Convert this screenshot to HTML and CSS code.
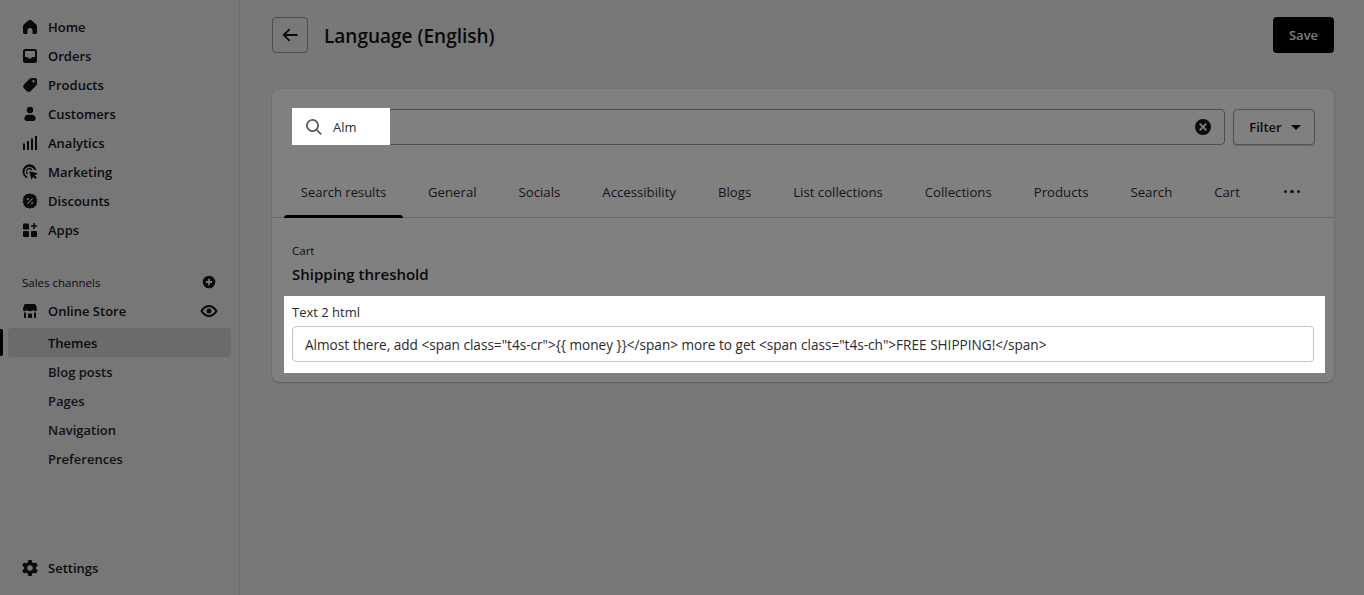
FILE: index.html
```html
<!DOCTYPE html>
<html lang="en">
<head>
    <meta charset="UTF-8">
    <title>Language (English)</title>
    <link rel="stylesheet" href="styles.css">
</head>
<body>
    <div class="app">
        <!-- Sidebar -->
        <aside class="sidebar">
            <nav class="nav-main">
                <a class="nav-item"><svg class="icon" viewBox="0 0 20 20"><path d="M10 2.800c-.5 0-1 .2-1.400.5L4 7.200c-.7.6-1 1.300-1 2.100V15.500c0 .9.700 1.500 1.500 1.500H7.500v-3.500a2.500 2.500 0 0 1 5 0V17h3c.8 0 1.500-.6 1.500-1.500V9.300c0-.8-.3-1.500-1-2.100l-4.600-3.900c-.4-.3-.9-.5-1.400-.5z"/></svg>Home</a>
                <a class="nav-item"><svg class="icon" viewBox="0 0 20 20"><path fill-rule="evenodd" d="M5.500 3A2.500 2.500 0 0 0 3 5.500v9A2.500 2.500 0 0 0 5.500 17h9a2.500 2.500 0 0 0 2.500-2.500v-9A2.500 2.500 0 0 0 14.500 3h-9zM5 5.500c0-.3.2-.5.500-.5h9c.3 0 .5.2.5.500V11h-2.500c-.5 0-.9.3-1 .8l-.2.7H8.200l-.2-.7c-.1-.5-.5-.8-1-.8H5V5.500z"/></svg>Orders</a>
                <a class="nav-item"><svg class="icon" viewBox="0 0 20 20"><path fill-rule="evenodd" d="M11.500 3H15c1.100 0 2 .9 2 2v3.500c0 .8-.3 1.500-.9 2.100l-5.300 5.300c-1.200 1.200-3 1.200-4.200 0l-2.500-2.500c-1.200-1.200-1.200-3 0-4.200l5.300-5.300c.6-.6 1.300-.9 2.100-.9zM13.500 7.500a1.200 1.200 0 1 0 0-2.400 1.200 1.200 0 0 0 0 2.400z"/></svg>Products</a>
                <a class="nav-item"><svg class="icon" viewBox="0 0 20 20"><circle cx="10" cy="6" r="3.200"/><path d="M4.300 14.500c0-2.300 1.900-3.700 3.700-3.700h4c1.800 0 3.700 1.400 3.700 3.700 0 1.500-1.100 2.500-2.400 2.500H6.700c-1.300 0-2.400-1-2.400-2.500z"/></svg>Customers</a>
                <a class="nav-item"><svg class="icon" viewBox="0 0 20 20"><path d="M3 10.500h2V17H3zM7 8h2v9H7zM11 5.500h2V17h-2zM15 3h2v14h-2z"/></svg>Analytics</a>
                <a class="nav-item"><svg class="icon" viewBox="0 0 20 20"><path d="M9.500 2.300a7.200 7.200 0 0 0-1.900 14.100l-.6-2.100a5.100 5.100 0 1 1 7.200-6.500l2.100.6A7.200 7.200 0 0 0 9.500 2.300z"/><path d="M9.500 5.800a3.700 3.700 0 0 0-1.500 7l-.4-2a2 2 0 1 1 3-2.900l2 .5A3.700 3.700 0 0 0 9.500 5.800z"/><path d="M9.200 9.200l8.800 2.400-3.300 1.600 2.200 2.300-1.400 1.400-2.300-2.200-1.600 3.300z"/></svg>Marketing</a>
                <a class="nav-item"><svg class="icon" viewBox="0 0 20 20"><path fill-rule="evenodd" d="M10 2.300l1.700.9 1.900-.3 1 1.600 1.700.8-.1 1.900 1.200 1.500-.8 1.300.8 1.300-1.200 1.500.1 1.900-1.700.8-1 1.600-1.900-.3-1.700.9-1.700-.9-1.900.3-1-1.600-1.700-.8.100-1.900-1.200-1.500.8-1.300-.8-1.300L3.600 7.200l-.1-1.900 1.700-.8 1-1.600 1.900.3zM12.300 7l-5.300 5.300.7.7L13 7.700zM7.900 8.900a1 1 0 1 0 0-2 1 1 0 0 0 0 2zM12.100 13.100a1 1 0 1 0 0-2 1 1 0 0 0 0 2z"/></svg>Discounts</a>
                <a class="nav-item"><svg class="icon" viewBox="0 0 20 20"><rect x="3" y="3.500" width="6" height="6" rx="1"/><rect x="3" y="11" width="6" height="6" rx="1"/><rect x="11" y="11" width="6" height="6" rx="1"/><path d="M13.250 3h1.500v2.250H17v1.500h-2.250V9h-1.500V6.750H11v-1.500h2.250z"/></svg>Apps</a>
            </nav>

            <div class="channels-head">
                <span>Sales channels</span>
                <svg class="icon-sm" viewBox="0 0 20 20"><path fill-rule="evenodd" d="M10 3a7 7 0 1 0 0 14 7 7 0 0 0 0-14zm-1 3.500h2V9h2.500v2H11v2.500H9V11H6.500V9H9z"/></svg>
            </div>
            <a class="nav-item store-item">
                <svg class="icon" viewBox="0 0 20 20"><path d="M5.500 3h9c.6 0 1.100.4 1.300.9L17 7.500v1c0 1-.8 1.700-1.700 1.700-.9 0-1.700-.5-2.100-1.200-.5.7-1.300 1.200-3.200 1.200-1.900 0-2.700-.5-3.200-1.200-.4.7-1.200 1.200-2.100 1.200-.9 0-1.700-.7-1.700-1.700v-1l1.200-3.600c.2-.5.700-.9 1.300-.9z"/><path d="M4 11.400h2V17H5c-.6 0-1-.4-1-1zM14 11.400h2V16c0 .6-.4 1-1 1h-1zM8 13.500c0-.6.4-1 1-1h2c.6 0 1 .4 1 1V17H8z"/></svg>
                <span class="nav-label">Online Store</span>
                <svg class="icon-eye" viewBox="0 0 20 20"><path fill-rule="evenodd" d="M10 4C5.800 4 2.900 7.500 1.800 9.300c-.3.500-.3 1 0 1.400C2.900 12.500 5.800 16 10 16s7.100-3.500 8.200-5.300c.3-.4.300-.9 0-1.400C17.100 7.500 14.200 4 10 4zm0 2c-3 0-5.200 2.400-6.300 4 1.100 1.600 3.300 4 6.300 4s5.200-2.400 6.300-4C15.200 8.400 13 6 10 6zm0 1.500a2.500 2.500 0 1 1 0 5 2.500 2.500 0 0 1 0-5z"/></svg>
            </a>
            <div class="subnav">
                <a class="sub-item active">Themes</a>
                <a class="sub-item">Blog posts</a>
                <a class="sub-item">Pages</a>
                <a class="sub-item">Navigation</a>
                <a class="sub-item">Preferences</a>
            </div>

            <a class="nav-item settings"><svg class="icon" viewBox="0 0 20 20"><path fill-rule="evenodd" d="M8.300 2h3.400l.5 2.500 1.500.8 2.400-.8 1.700 3-1.900 1.700v1.600l1.900 1.700-1.700 3-2.400-.8-1.500.8-.5 2.500H8.300l-.5-2.500-1.500-.8-2.400.8-1.700-3 1.900-1.700V9.200L2.200 7.500l1.700-3 2.400.8 1.500-.8zM10 7.300a2.700 2.700 0 1 0 0 5.400 2.700 2.700 0 0 0 0-5.400z"/></svg>Settings</a>
        </aside>

        <!-- Main content -->
        <main class="content">
            <header class="page-head">
                <button class="back-btn"><svg class="icon" viewBox="0 0 20 20"><path d="M9 3.500l1.300 1.300-4.300 4.300H17.500v1.800H6l4.300 4.300L9 16.500 2.500 10z"/></svg></button>
                <h1>Language (English)</h1>
                <button class="save-btn">Save</button>
            </header>

            <section class="card">
                <div class="search-row">
                    <div class="search-box">
                        <div class="search-spot">
                            <svg class="icon search-icon" viewBox="0 0 20 20"><path fill-rule="evenodd" d="M8.500 2a6.500 6.500 0 1 0 3.800 11.800l4.200 4.200 1.300-1.300-4.200-4.200A6.500 6.500 0 0 0 8.500 2zm0 1.800a4.700 4.700 0 1 1 0 9.400 4.700 4.700 0 0 1 0-9.400z"/></svg>
                            <span>Alm</span>
                        </div>
                        <svg class="icon clear-icon" viewBox="0 0 20 20"><path fill-rule="evenodd" d="M10 2a8 8 0 1 0 0 16 8 8 0 0 0 0-16zM7.300 6l2.700 2.700L12.700 6 14 7.300 11.300 10l2.700 2.700-1.300 1.300-2.700-2.700L7.300 14 6 12.700 8.700 10 6 7.300z"/></svg>
                    </div>
                    <button class="filter-btn">Filter<span class="caret"></span></button>
                </div>

                <div class="tabs">
                    <a class="tab active">Search results</a>
                    <a class="tab">General</a>
                    <a class="tab">Socials</a>
                    <a class="tab">Accessibility</a>
                    <a class="tab">Blogs</a>
                    <a class="tab">List collections</a>
                    <a class="tab">Collections</a>
                    <a class="tab">Products</a>
                    <a class="tab">Search</a>
                    <a class="tab">Cart</a>
                    <a class="tab more"><i></i><i></i><i></i></a>
                </div>

                <div class="section">
                    <div class="crumb">Cart</div>
                    <h2>Shipping threshold</h2>
                    <div class="field-spot">
                        <label>Text 2 html</label>
                        <div class="text-input">Almost there, add &lt;span class="t4s-cr"&gt;{{ money }}&lt;/span&gt; more to get &lt;span class="t4s-ch"&gt;FREE SHIPPING!&lt;/span&gt;</div>
                    </div>
                </div>
            </section>
        </main>
    </div>
</body>
</html>
```

FILE: styles.css
```css
* {
    box-sizing: border-box;
}

html, body {
    margin: 0;
    padding: 0;
    height: 595px;
    overflow: hidden;
}

body {
    font-family: "Open Sans", "Noto Sans", sans-serif;
    font-size: 13px;
    color: #0b0b0b;
    background: #787878;
}

.app {
    display: flex;
    height: 595px;
}

/* Sidebar */
.sidebar {
    width: 240px;
    flex-shrink: 0;
    display: flex;
    flex-direction: column;
    padding-top: 12px;
    background: #777778;
    border-right: 1px solid #6b6b6b;
}

.nav-item {
    display: flex;
    align-items: center;
    height: 29px;
    padding-left: 20px;
    font-weight: 600;
    color: #0b0b0d;
}

.icon {
    width: 20px;
    height: 20px;
    flex-shrink: 0;
    fill: #0a0a0a;
}

.nav-item .icon {
    margin-right: 8px;
}

.nav-label {
    flex: 1;
}

.channels-head {
    display: flex;
    justify-content: space-between;
    align-items: center;
    height: 20px;
    margin-top: 28px;
    padding: 0 22px;
    font-size: 11.500px;
}

.store-item {
    margin-top: 4px;
}

.icon-sm {
    width: 18px;
    height: 18px;
    margin-right: -1px;
    fill: #0a0a0a;
}

.icon-eye {
    width: 20px;
    height: 20px;
    margin-right: 20px;
    fill: #0a0a0a;
}

.subnav {
    display: flex;
    flex-direction: column;
    margin-top: 3px;
}

.sub-item {
    position: relative;
    display: flex;
    align-items: center;
    height: 29px;
    margin: 0 8px;
    padding-left: 40px;
    font-weight: 600;
    color: #111113;
    border-radius: 4px;
}

.sub-item.active {
    background: #6b6b6c;
    color: #07090d;
}

.sub-item.active::before {
    content: "";
    position: absolute;
    left: -8px;
    top: 1px;
    bottom: 1px;
    width: 3px;
    background: #000;
    border-radius: 0 2px 2px 0;
}

.settings {
    margin-top: auto;
    margin-bottom: 13px;
}

/* Main */
.content {
    flex: 1;
    min-width: 0;
    padding: 17px 30px 0 32px;
}

.page-head {
    display: flex;
    align-items: center;
    height: 36px;
}

.page-head h1 {
    flex: 1;
    margin: 2px 0 0 16px;
    font-size: 19px;
    font-weight: 600;
    color: #090909;
}

.back-btn {
    width: 36px;
    height: 36px;
    display: flex;
    align-items: center;
    justify-content: center;
    padding: 0;
    background: none;
    border: 1px solid #4d4d4d;
    border-radius: 4px;
}

.save-btn {
    width: 61px;
    height: 36px;
    padding: 0;
    font-family: inherit;
    font-size: 13px;
    font-weight: 600;
    color: #74827f;
    background: #000;
    border: none;
    border-radius: 4px;
}

.card {
    margin-top: 36px;
    height: 293px;
    background: #808080;
    border-radius: 8px;
    box-shadow: 0 1px 2px #5c5c5c;
}

.search-row {
    display: flex;
    gap: 8px;
    padding: 20px 19px 0 20px;
}

.search-box {
    flex: 1;
    height: 36px;
    display: flex;
    align-items: center;
    justify-content: space-between;
    padding-right: 11px;
    border: 1px solid #4f4f4f;
    border-radius: 4px;
}

.search-spot {
    display: flex;
    align-items: center;
    width: 98px;
    height: 37px;
    margin: -1px 0 0 -1px;
    padding-left: 12px;
    background: #fff;
    font-size: 13px;
    color: #2c2c34;
}

.search-icon {
    fill: #5c5f62;
    margin-right: 9px;
}

.clear-icon {
    width: 20px;
    height: 20px;
}

.filter-btn {
    width: 82px;
    height: 36px;
    display: flex;
    align-items: center;
    justify-content: center;
    gap: 9px;
    padding: 0 0 0 2px;
    font-family: inherit;
    font-size: 13px;
    font-weight: 600;
    color: #0b0b0d;
    background: none;
    border: 1px solid #545454;
    border-radius: 4px;
    box-shadow: 0 1px 1px #666;
}

.caret {
    width: 0;
    height: 0;
    border-left: 5px solid transparent;
    border-right: 5px solid transparent;
    border-top: 5px solid #0b0b0b;
}

.tabs {
    display: flex;
    gap: 8px;
    height: 54px;
    margin-top: 19px;
    padding: 0 12px;
    border-bottom: 1px solid #676767;
}

.tab {
    position: relative;
    flex-shrink: 0;
    display: flex;
    align-items: center;
    padding: 2px 17px 0;
    font-size: 13.200px;
    white-space: nowrap;
    color: #141418;
}

.tab.active {
    width: 119px;
    padding: 2px 0 0;
    justify-content: center;
    font-size: 13px;
}

.tab.active::after {
    content: "";
    position: absolute;
    left: 0;
    right: 0;
    bottom: -1px;
    height: 3px;
    background: #000;
    border-radius: 3px 3px 0 0;
}

.more {
    gap: 3px;
    padding-left: 19px;
}

.more i {
    width: 3.500px;
    height: 3.500px;
    border-radius: 50%;
    background: #141418;
}

.section {
    padding: 25px 20px 0;
}

.crumb {
    font-size: 11.500px;
    line-height: 16px;
    color: #0e0e0e;
}

.section h2 {
    margin: 3px 0 0;
    font-size: 15px;
    line-height: 24px;
    font-weight: 600;
    color: #08090c;
}

.field-spot {
    margin: 10px -11px 0 -8px;
    height: 77px;
    padding: 7px 11px 0 8px;
    background: #fff;
}

.field-spot label {
    display: block;
    font-size: 13px;
    line-height: 18px;
    color: #2a2a30;
}

.text-input {
    height: 36px;
    margin-top: 5px;
    padding: 0 12px;
    display: flex;
    align-items: center;
    font-size: 13.600px;
    color: #2a2a30;
    border: 1px solid #c4c4c8;
    border-radius: 4px;
}
```
